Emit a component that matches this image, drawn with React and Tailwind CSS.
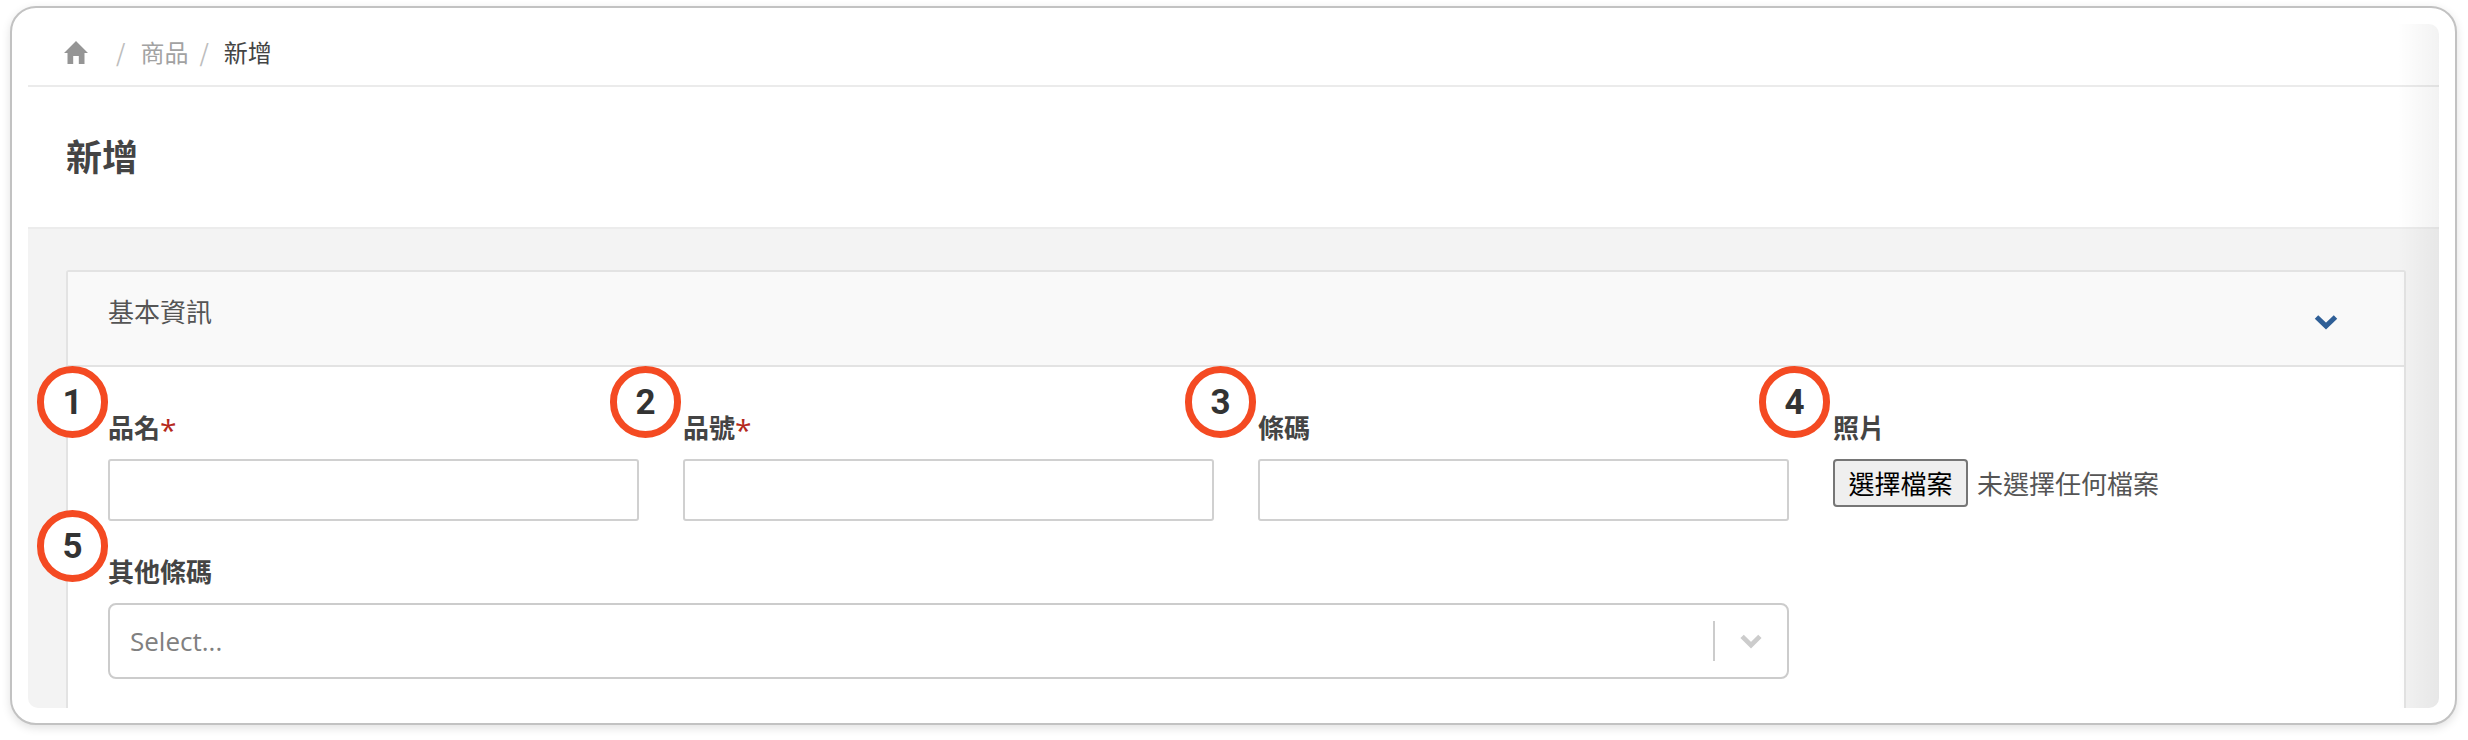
import React from "react";

const cjk = "font-['Noto_Sans_CJK_TC','Noto_Sans',sans-serif]";

function Marker({ value, className }) {
  return (
    <div
      className={`absolute flex h-[72px] w-[71px] items-center justify-center rounded-full border-[7px] border-[#f44a22] bg-white pt-[2px] font-['Roboto',sans-serif] text-[35px] font-bold text-[#333] ${className}`}
    >
      {value}
    </div>
  );
}

function Field({ label, required, children }) {
  return (
    <div className="flex flex-col">
      <label className="mb-[19px] flex h-[26px] items-center text-[26px] font-bold leading-[26px] text-[#444]">
        {label}
        {required && (
          <span className="relative top-[3px] font-['Open_Sans',sans-serif] text-[30px] font-normal text-[#b5291c]">*</span>
        )}
      </label>
      {children}
    </div>
  );
}

function TextInput() {
  return (
    <input
      type="text"
      className="h-[62px] w-full rounded-[3px] border-2 border-[#d0d0d0] bg-white outline-none"
    />
  );
}

export default function App() {
  return (
    <div className={`h-[740px] w-[2468px] overflow-hidden bg-white pl-[10px] pt-[6px] ${cjk}`}>
      <div className="h-[719px] w-[2447px] rounded-[26px] border-2 border-[#c2c2c2] bg-white p-[16px] shadow-[0_3px_10px_rgba(0,0,0,0.12)]">
        <div className="relative flex h-[684px] flex-col overflow-hidden rounded-b-[10px] rounded-tr-[10px]">
          <div className="flex h-[63px] shrink-0 items-center border-b-2 border-[#ebebeb] pb-[5px] pl-[36px] text-[24px] leading-none">
            <svg viewBox="0 0 24 24" className="h-[26px] w-[24px] fill-[#959595]">
              <path d="M12 1 L24 13 H20.5 V24 H14.8 V16 H9.2 V24 H3.5 V13 H0 Z" />
            </svg>
            <span className="ml-[28px] text-[#bdbdbd]">/</span>
            <span className="ml-[15px] text-[#a2a2a2]">商品</span>
            <span className="ml-[11px] text-[#bdbdbd]">/</span>
            <span className="ml-[15px] text-[#444]">新增</span>
          </div>

          <div className="flex h-[140px] shrink-0 items-center pb-[5px] pl-[38px]">
            <h1 className="text-[36px] font-bold leading-none text-[#444]">新增</h1>
          </div>

          <div className="flex-1 border-t-2 border-[#ececec] bg-[#f3f3f3] pl-[38px] pr-[33px] pt-[41px]">
            <div className="relative h-[440px] rounded-t-[3px] border-x-2 border-t-2 border-[#e3e3e3] bg-white">
              <div className="flex h-[95px] items-center justify-between border-b-2 border-[#e3e3e3] bg-[#f9f9f9] pl-[40px] pr-[66px]">
                <span className="-mt-[16px] text-[26px] text-[#555]">基本資訊</span>
                <svg viewBox="0 0 24 16" className="mt-[7px] h-[16px] w-[24px]">
                  <path d="M2.5 3 L12 12 L21.5 3" fill="none" stroke="#2f5f97" strokeWidth="5" />
                </svg>
              </div>

              <div className="grid grid-cols-[531px_531px_531px_531px] gap-x-[44px] gap-y-[37px] pl-[40px] pt-[47px]">
                <Field label="品名" required>
                  <TextInput />
                </Field>
                <Field label="品號" required>
                  <TextInput />
                </Field>
                <Field label="條碼">
                  <TextInput />
                </Field>
                <Field label="照片">
                  <div className="flex items-center">
                    <button
                      type="button"
                      className="h-[48px] w-[135px] rounded-[4px] border-2 border-[#767676] bg-[#efefef] text-[26px] leading-none text-black"
                    >
                      選擇檔案
                    </button>
                    <span className="ml-[9px] text-[26px] leading-none text-[#555]">未選擇任何檔案</span>
                  </div>
                </Field>
                <div className="col-span-3">
                  <Field label="其他條碼">
                    <div className="flex h-[76px] items-center rounded-[8px] border-2 border-[#cccccc] bg-white pl-[20px] pr-[24px]">
                      <span className="flex-1 font-['Open_Sans',sans-serif] text-[26px] text-[#808080]">Select...</span>
                      <div className="h-[40px] w-[2px] bg-[#cccccc]" />
                      <svg viewBox="0 0 24 16" className="ml-[24px] h-[15px] w-[24px]">
                        <path d="M2.5 2.5 L12 12 L21.5 2.5" fill="none" stroke="#cccccc" strokeWidth="5" />
                      </svg>
                    </div>
                  </Field>
                </div>
              </div>
            </div>
          </div>

          <div className="pointer-events-none absolute inset-y-0 right-0 w-[42px] bg-gradient-to-r from-black/0 to-black/[0.05]" />

          <Marker value="1" className="left-[9px] top-[342px]" />
          <Marker value="2" className="left-[582px] top-[342px]" />
          <Marker value="3" className="left-[1157px] top-[342px]" />
          <Marker value="4" className="left-[1731px] top-[342px]" />
          <Marker value="5" className="left-[9px] top-[486px]" />
        </div>
      </div>
    </div>
  );
}
